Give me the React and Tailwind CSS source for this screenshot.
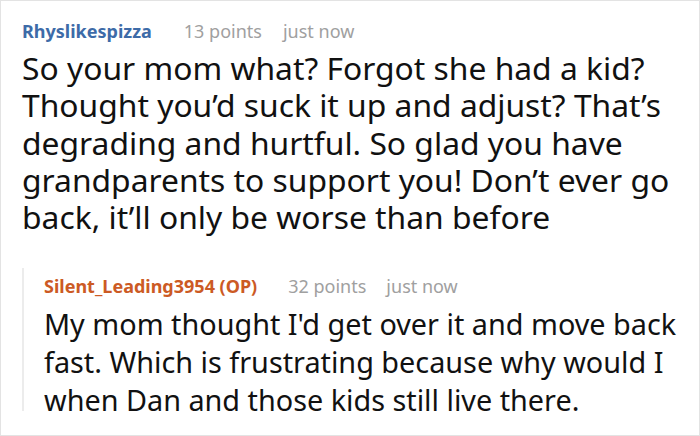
export default function App() {
  return (
    <div
      className="w-[700px] h-[436px] bg-white border border-[#e3e3e3] overflow-hidden"
      style={{ fontFamily: '"Noto Sans", "Open Sans", sans-serif' }}
    >
      <div className="pl-[21px] pt-[17px]">
        <div className="flex items-baseline text-[18px] leading-[26px]">
          <span className="font-bold text-[#3d6ba8]">Rhyslikespizza</span>
          <span className="ml-[32px] text-[#a0a0a0]">13 points</span>
          <span className="ml-[21px] text-[#a0a0a0]">just now</span>
        </div>
        <p className="mt-[5px] text-[31.8px] leading-[37.25px] text-[#111] pr-[15px]">
          So your mom what? Forgot she had a kid? Thought you’d suck it up and adjust? That’s degrading and hurtful. So glad you have grandparents to support you! Don’t ever go back, it’ll only be worse than before
        </p>
        <div className="mt-[33px] h-[143px] border-l-2 border-[#ececec] pl-[20px] pt-[5px]">
          <div className="flex items-baseline text-[18px] leading-[26px]">
            <span className="font-bold text-[#cc5a24]">Silent_Leading3954 (OP)</span>
            <span className="ml-[31px] text-[#a0a0a0]">32 points</span>
            <span className="ml-[20px] text-[#a0a0a0]">just now</span>
          </div>
          <p className="mt-[6px] text-[28.8px] leading-[38px] text-[#111]">
            My mom thought I'd get over it and move back fast. Which is frustrating because why would I when Dan and those kids still live there.
          </p>
        </div>
      </div>
    </div>
  );
}
